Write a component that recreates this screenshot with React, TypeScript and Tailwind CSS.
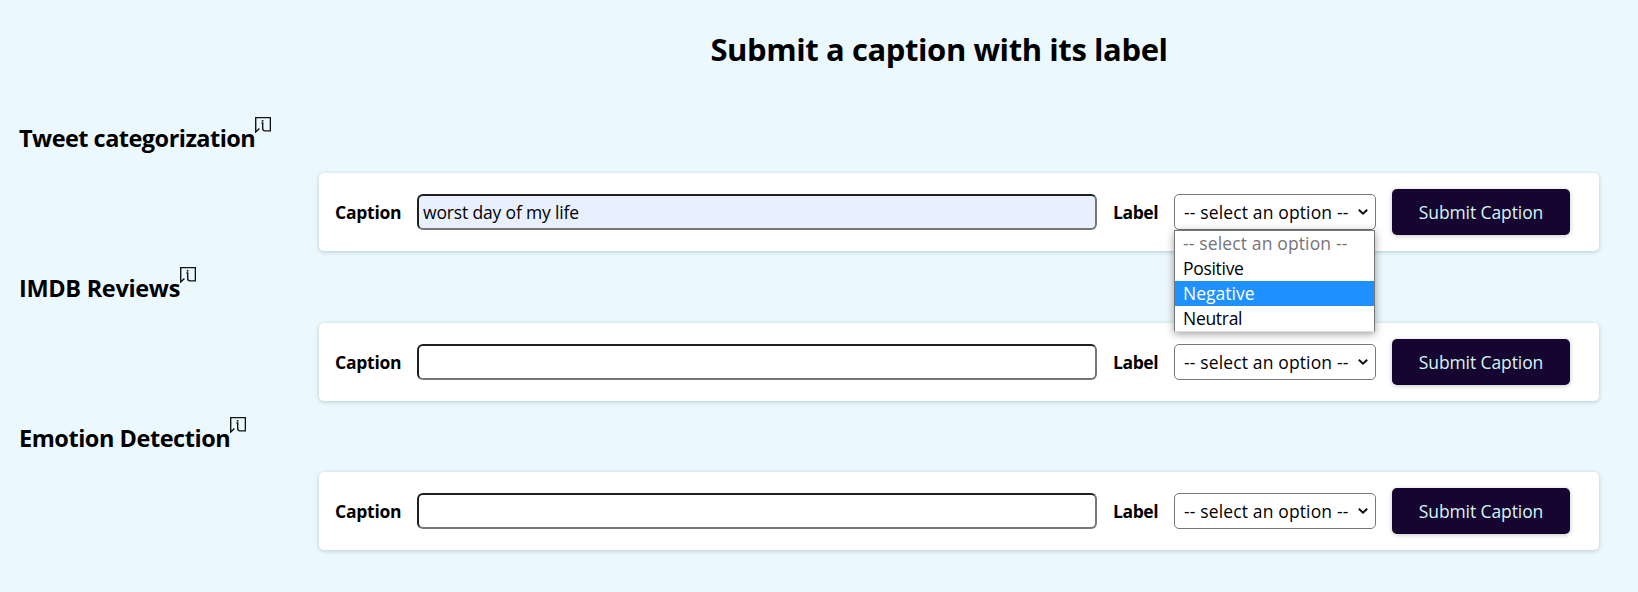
import React from 'react';

function InfoIcon() {
  return (
    <svg className="mt-[17px] h-[16px] w-[16px] shrink-0" viewBox="0 0 16 16" fill="none" stroke="#101414">
      <path d="M4.4 11.4 L0.7 15 V0.6 H15.4 V13.9 H10 Q7.7 13.9 7.7 11.6 V6 H6.4" strokeWidth="1.4" />
      <path d="M7.6 3v1.6" strokeWidth="1.6" />
    </svg>
  );
}

function Dropdown() {
  return (
    <div className="absolute -left-px top-[35px] z-10 h-[102px] w-[201px] border border-[#767676] border-b-[#dedede] bg-white shadow-[0_2px_8px_rgba(0,0,0,0.38)]">
      <div className="h-[25px] pl-[8px] leading-[25px] tracking-[0.14px] text-[#757575]">-- select an option --</div>
      <div className="h-[25px] pl-[8px] leading-[25px] tracking-[-0.3px]">Positive</div>
      <div className="h-[25px] bg-[#1e90ff] pl-[8px] leading-[25px] text-white">Negative</div>
      <div className="h-[25px] pl-[8px] leading-[25px] tracking-[-0.3px]">Neutral</div>
    </div>
  );
}

function Select({ open }: { open?: boolean }) {
  return (
    <div className="relative ml-[15px] flex h-[36px] w-[202px] shrink-0 items-center rounded-[5px] border border-[#767676] bg-white pl-[9px]">
      <span className="whitespace-nowrap tracking-[0.14px]">-- select an option --</span>
      <svg className="ml-auto mr-[7px] h-[8px] w-[10px]" viewBox="0 0 10 8" fill="none" stroke="#101010" strokeWidth="2">
        <path d="M0.8 1.7 5 5.7 9.2 1.7" />
      </svg>
      {open && <Dropdown />}
    </div>
  );
}

type SectionProps = {
  title: string;
  titleClass: string;
  headClass: string;
  value?: string;
  open?: boolean;
};

function Section({ title, titleClass, headClass, value, open }: SectionProps) {
  return (
    <section className="h-[150px]">
      <div className={`flex pl-[19px] ${headClass}`}>
        <h2 className={`mt-[22px] h-[32px] whitespace-nowrap text-[23.5px] font-bold leading-[32px] ${titleClass}`}>{title}</h2>
        <InfoIcon />
      </div>
      <form className="ml-[319px] flex h-[78px] w-[1280px] items-center rounded-[5px] bg-white pl-[16px] shadow-[0_1px_4px_rgba(0,50,50,0.22)]">
        <label className="w-[82px] shrink-0 font-bold tracking-[-0.25px]">Caption</label>
        <input
          defaultValue={value}
          className={`h-[36px] w-[680px] shrink-0 rounded-[6px] border-2 border-b-[#767676] border-l-[#1f1f1f] border-r-[#767676] border-t-[#1f1f1f] pl-[4px] tracking-[-0.16px] outline-none ${value ? 'bg-[#e8f0fe]' : 'bg-white'}`}
        />
        <label className="ml-[16px] w-[46px] shrink-0 font-bold tracking-[-0.4px]">Label</label>
        <Select open={open} />
        <button
          type="button"
          className="ml-[16px] h-[46px] w-[178px] shrink-0 rounded-[5px] bg-[#150530] tracking-[-0.1px] text-[#d5f5f3] shadow-[0_1px_5px_rgba(0,0,0,0.22)]"
        >
          Submit Caption
        </button>
      </form>
    </section>
  );
}

export default function App() {
  return (
    <main className="h-[592px] overflow-hidden bg-[#ebf8fd] font-['Open_Sans','Noto_Sans',sans-serif] text-[17.5px] text-black">
      <div className="flex h-[100px] pl-[240px] pt-[28px]">
        <h1 className="w-full text-center text-[31px] font-bold leading-[42px] tracking-[-0.41px]">Submit a caption with its label</h1>
      </div>
      <Section headClass="h-[73px]" title="Tweet categorization" titleClass="tracking-[-0.53px]" value="worst day of my life" open />
      <Section headClass="h-[73px]" title="IMDB Reviews" titleClass="tracking-[-0.32px]" />
      <Section headClass="h-[72px]" title="Emotion Detection" titleClass="tracking-[-0.46px]" />
    </main>
  );
}
